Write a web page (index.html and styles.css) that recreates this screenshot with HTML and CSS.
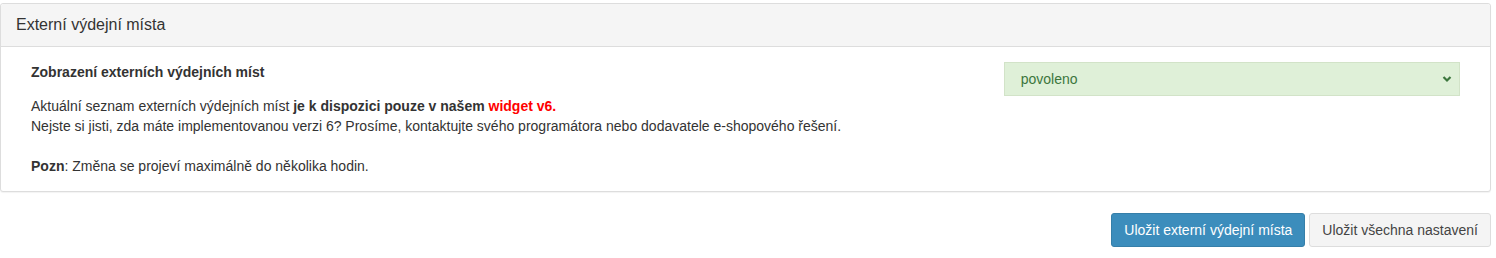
FILE: index.html
```html
<!DOCTYPE html>
<html lang="cs">
<head>
    <meta charset="UTF-8">
    <meta name="viewport" content="width=device-width, initial-scale=1.0">
    <link rel="stylesheet" href="styles.css">
</head>
<body>
<div class="page">
    <div class="panel">
        <div class="panel-heading">Externí výdejní místa</div>
        <div class="panel-body">
            <div class="col-main">
                <label class="field-label">Zobrazení externích výdejních míst</label>
                <p class="help">
                    Aktuální seznam externích výdejních míst <b>je k dispozici pouze v našem <span class="red">widget v6.</span></b><br>
                    Nejste si jisti, zda máte implementovanou verzi 6? Prosíme, kontaktujte svého programátora nebo dodavatele e-shopového řešení.<br>
                    <br>
                    <b>Pozn</b>: Změna se projeví maximálně do několika hodin.
                </p>
            </div>
            <div class="col-side">
                <div class="select-wrap">
                    <select class="form-control">
                        <option>povoleno</option>
                        <option>zakázáno</option>
                    </select>
                    <svg class="caret" width="10" height="8" viewBox="0 0 10 8">
                        <path d="M1.5 2 L5 5.5 L8.5 2" fill="none" stroke="#3c763d" stroke-width="2.2"/>
                    </svg>
                </div>
            </div>
        </div>
    </div>
    <div class="actions">
        <button class="btn btn-primary">Uložit externí výdejní místa</button>
        <button class="btn btn-default">Uložit všechna nastavení</button>
    </div>
</div>
</body>
</html>
```

FILE: styles.css
```css
body {
    margin: 0;
    font-family: "Liberation Sans", Arial, sans-serif;
    font-size: 14px;
    line-height: 20px;
    color: #333;
    background: #fff;
}

.page {
    padding: 3px 5px 0 0;
}

.panel {
    border: 1px solid #ddd;
    border-radius: 3px;
    background: #fff;
    box-shadow: 0 1px 1px rgba(0, 0, 0, 0.05);
    margin-bottom: 21px;
}

.panel-heading {
    background: #f5f5f5;
    border-bottom: 1px solid #ddd;
    padding: 11px 15px;
    font-size: 16px;
    line-height: 20px;
    color: #333;
    border-radius: 3px 3px 0 0;
}

.panel-body {
    display: flex;
    padding: 15px;
}

.col-main {
    width: 66.6667%;
    padding: 0 15px;
    box-sizing: border-box;
}

.col-side {
    width: 33.3333%;
    padding: 0 15px;
    box-sizing: border-box;
}

.field-label {
    display: block;
    font-weight: bold;
    margin-bottom: 14px;
}

.help {
    margin: 0;
}

.red {
    color: #f00;
}

.select-wrap {
    position: relative;
}

.form-control {
    display: block;
    width: 100%;
    height: 34px;
    padding: 6px 12px 6px 16px;
    font-family: inherit;
    font-size: 14px;
    color: #3c763d;
    background: #dff0d8;
    border: 1px solid #d2e3c8;
    border-radius: 0;
    appearance: none;
    -webkit-appearance: none;
    box-sizing: border-box;
}

.caret {
    position: absolute;
    right: 8px;
    top: 13px;
    pointer-events: none;
}

.actions {
    display: flex;
    justify-content: flex-end;
    gap: 4px;
}

.btn {
    font-family: inherit;
    font-size: 14px;
    line-height: 20px;
    padding: 6px 12px;
    border-radius: 3px;
    border: 1px solid transparent;
    cursor: pointer;
}

.btn-primary {
    background: #3c8dbc;
    border-color: #367fa9;
    color: #fff;
}

.btn-default {
    background: #f4f4f4;
    border-color: #ddd;
    color: #444;
}
```
